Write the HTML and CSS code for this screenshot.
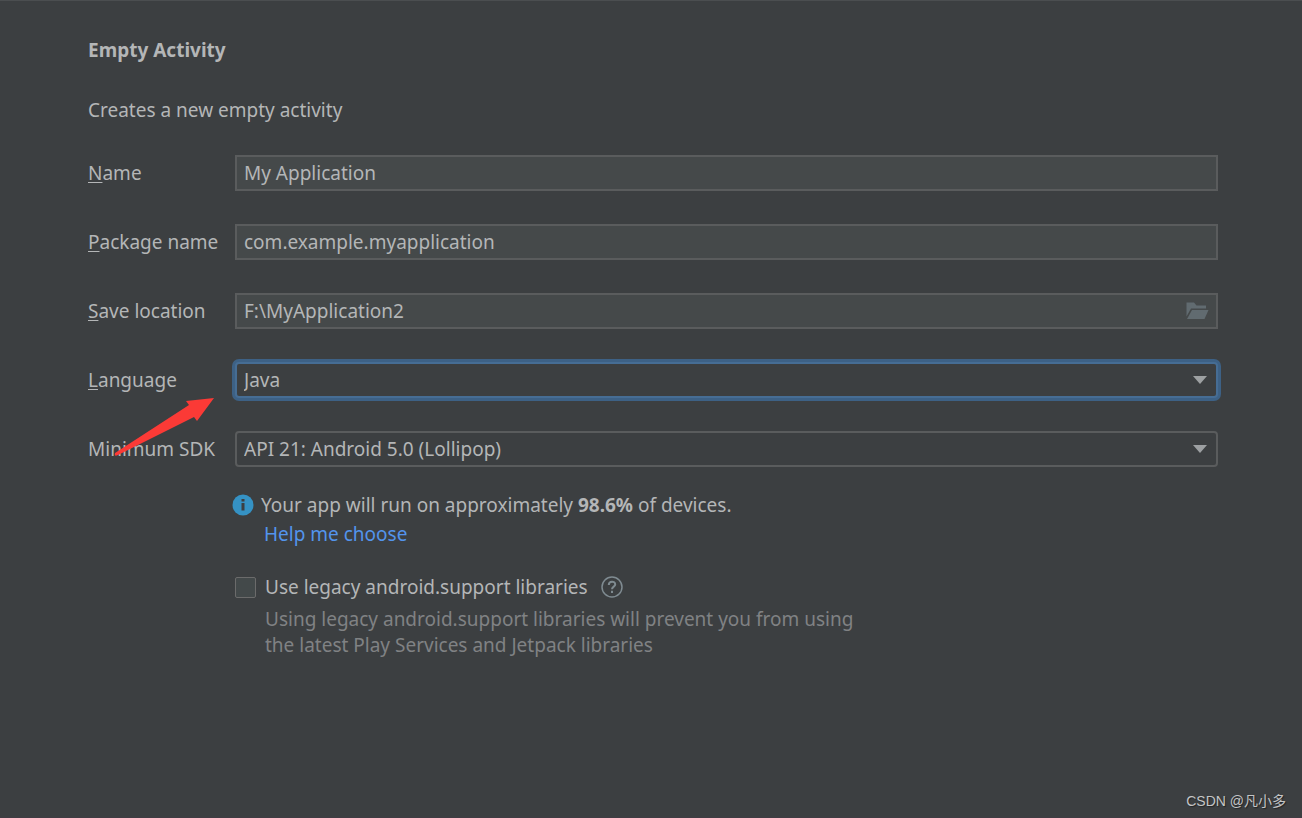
FILE: index.html
```html
<!DOCTYPE html>
<html lang="en">
<head>
<meta charset="utf-8">
<title>Empty Activity</title>
<link rel="stylesheet" href="styles.css">
</head>
<body>
<main class="wizard">
  <h1 class="title">Empty Activity</h1>
  <p class="intro">Creates a new empty activity</p>
  <form class="form">
    <label class="label" for="name"><u>N</u>ame</label>
    <div class="control">
      <input class="field" id="name" type="text" value="My Application">
    </div>

    <label class="label" for="package"><u>P</u>ackage name</label>
    <div class="control">
      <input class="field" id="package" type="text" value="com.example.myapplication">
    </div>

    <label class="label" for="location"><u>S</u>ave location</label>
    <div class="control">
      <input class="field" id="location" type="text" value="F:\MyApplication2">
      <button class="browse" type="button" aria-label="Browse">
        <svg width="23" height="18" viewBox="0 0 23 18"><path d="M0.5 0.5H8L10.5 3.5H20V6.5H5L0.5 14.500Z"/><path d="M6 8H22.500L18.500 17H1Z"/></svg>
      </button>
    </div>

    <label class="label" for="language"><u>L</u>anguage</label>
    <div class="control">
      <select class="field select focused" id="language"><option>Java</option></select>
      <svg class="caret" width="14" height="8" viewBox="0 0 14 8"><path d="M0 0H14L7 8Z"/></svg>
      <svg class="arrow" width="102" height="60" viewBox="0 0 102 60"><path d="M101 1L73 4L76 8L2 56Q1 60 5 58L81 20L84 24Z"/></svg>
    </div>

    <label class="label" for="sdk">Minimum SDK</label>
    <div class="control">
      <select class="field select" id="sdk"><option>API 21: Android 5.0 (Lollipop)</option></select>
      <svg class="caret" width="14" height="8" viewBox="0 0 14 8"><path d="M0 0H14L7 8Z"/></svg>
    </div>

    <div class="details">
      <div class="info">
        <svg width="22" height="22" viewBox="0 0 22 22"><circle cx="11" cy="11" r="10.500" fill="#3592c4"/><path d="M9.500 5h3v2.500h-3zM9.500 9h3v7.500h-3z" fill="#3c3f41"/></svg>
        <p>Your app will run on approximately <b>98.6%</b> of devices.</p>
      </div>
      <a class="help-link" href="#">Help me choose</a>
      <div class="legacy">
        <input class="check" id="legacy" type="checkbox">
        <label for="legacy">Use legacy android.support libraries</label>
        <button class="help" type="button" aria-label="Help">
          <svg width="22" height="22" viewBox="0 0 22 22" fill="none" stroke="#7f8b91"><circle cx="11" cy="11" r="10" stroke-width="1.500"/><path d="M7.800 9C7.800 4.500 14.200 4.700 14.200 8.500C14.200 10.600 11 10.700 11 13.200M11 14.800V17" stroke-width="2"/></svg>
        </button>
      </div>
      <p class="hint">Using legacy android.support libraries will prevent you from using<br>the latest Play Services and Jetpack libraries</p>
    </div>
  </form>
</main>
<footer class="watermark">CSDN @凡小多</footer>
</body>
</html>
```
FILE: styles.css
```css
* {
  box-sizing: border-box;
}

body {
  margin: 0;
  min-height: 100vh;
  display: flex;
  flex-direction: column;
  justify-content: space-between;
  background: #3c3f41;
  border-top: 1px solid #4b4e50;
  border-bottom: 1px solid #403c43;
  color: #b4b6b7;
  font: 19px/26px "Noto Sans", "Open Sans", sans-serif;
}

.wizard {
  padding: 36px 84px 0 88px;
}

.title,
.intro {
  margin: 0 0 34px;
  font-size: 19px;
}

.intro {
  margin-bottom: 32px;
}

.form {
  display: grid;
  grid-template-columns: 147px 1fr;
  row-gap: 33px;
  align-items: center;
}

.label {
  white-space: nowrap;
}

.label u {
  text-underline-offset: 2px;
}

.control {
  display: grid;
  grid-template-columns: 1fr auto;
  align-items: center;
  position: relative;
}

.field {
  grid-area: 1 / 1 / 2 / 3;
  width: 100%;
  height: 36px;
  margin: 0;
  padding: 0 7px;
  border: 2px solid #5a5c5d;
  background: #45494a;
  color: inherit;
  font: inherit;
  outline: none;
}

.select {
  appearance: none;
  border-radius: 4px;
  background: #3c3f41;
}

.focused {
  border-color: #466d94;
  box-shadow: 0 0 0 3px #3d6185;
}

.browse,
.help {
  display: flex;
  padding: 0;
  border: 0;
  background: none;
}

.browse {
  grid-area: 1 / 2;
  margin-right: 9px;
  fill: #616b70;
}

.caret {
  grid-area: 1 / 2;
  margin-right: 11px;
  fill: #9da0a2;
  pointer-events: none;
}

.arrow {
  position: absolute;
  left: -122px;
  top: 35px;
  fill: #fb3a36;
}

.details {
  grid-column: 2;
  margin-top: -8px;
}

.info {
  display: flex;
  align-items: center;
  gap: 7px;
  margin-left: -3px;
}

.info p,
.hint {
  margin: 0;
}

.help-link {
  display: inline-block;
  margin: 3px 0 0 29px;
  color: #5394ec;
  text-decoration: none;
}

.legacy {
  display: flex;
  align-items: center;
  margin-top: 27px;
}

.check {
  appearance: none;
  width: 21px;
  height: 21px;
  margin: 0 9px 0 0;
  border: 1px solid #6b6b6b;
  border-radius: 2px;
  background: #43494a;
}

.help {
  margin-left: 13px;
}

.hint {
  margin: 6px 0 0 30px;
  color: #808284;
}

.watermark {
  align-self: flex-end;
  padding: 0 16px 6px 0;
  color: #c4c5c6;
  font: 14px/20px "Liberation Sans", "Noto Sans CJK SC", sans-serif;
  text-shadow: 1px 1px 1px #222426;
}
```
